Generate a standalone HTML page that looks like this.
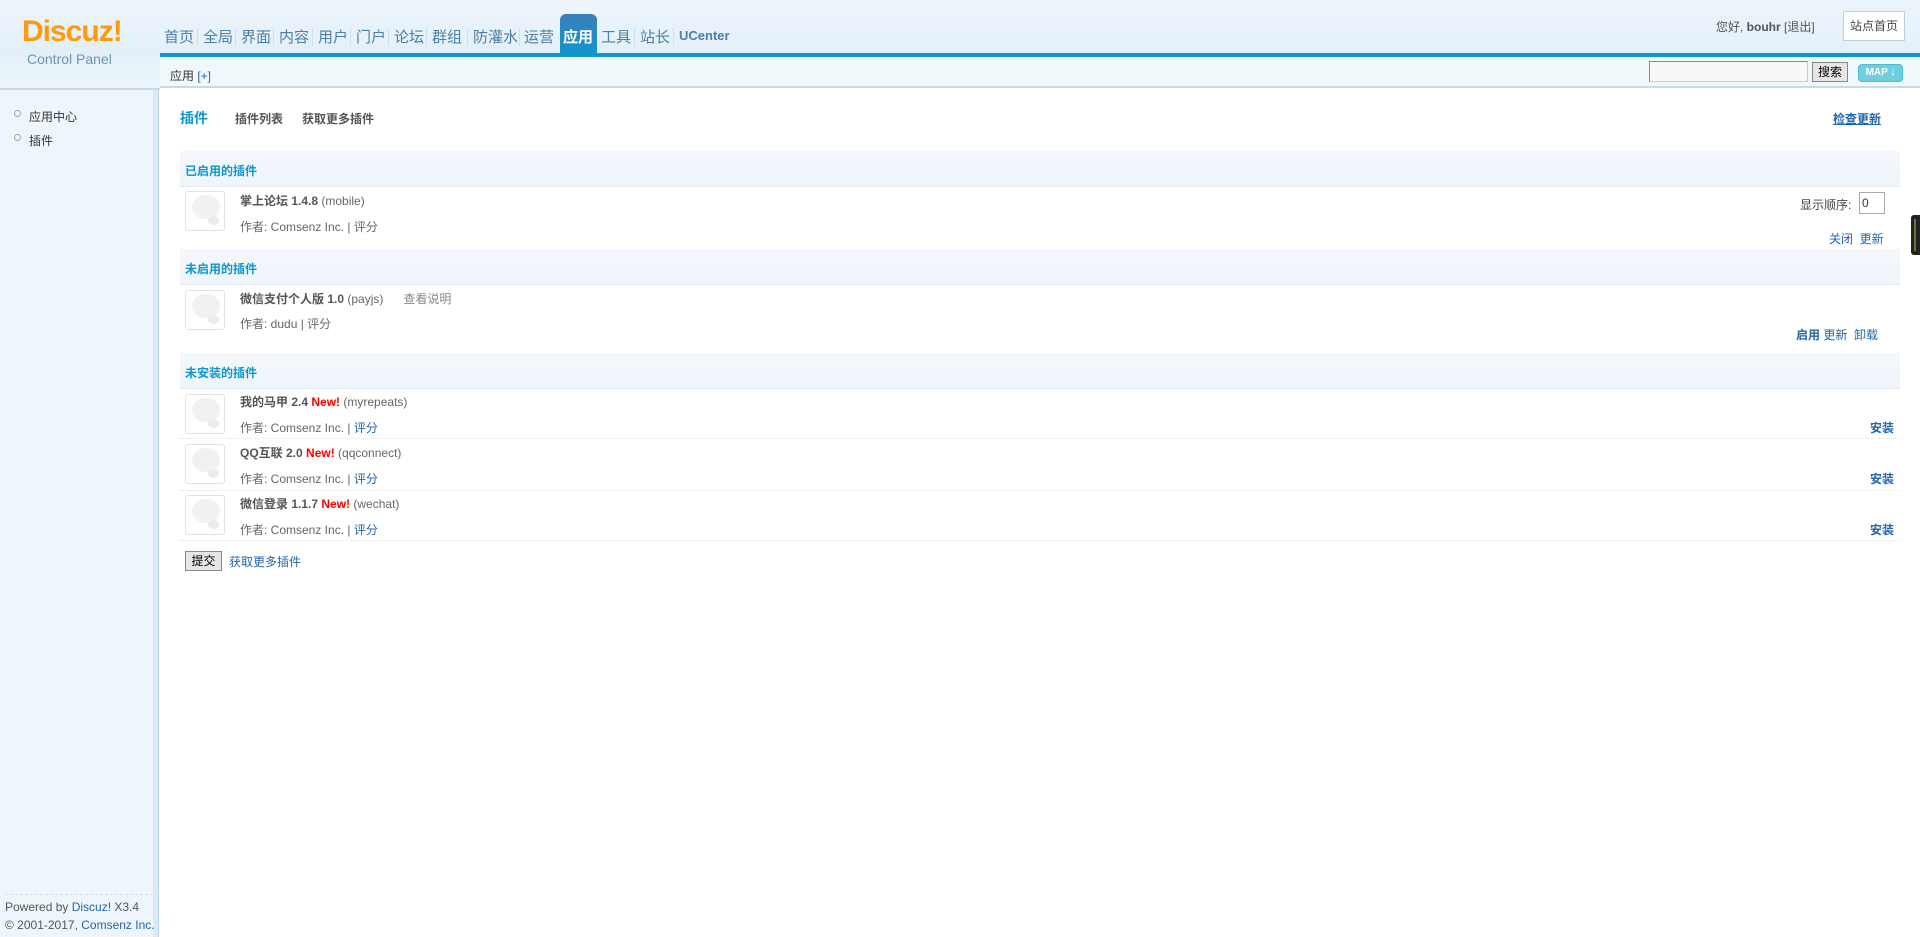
<!DOCTYPE html>
<html><head><meta charset="utf-8"><style>
*{margin:0;padding:0;box-sizing:border-box}
body{width:1920px;height:937px;position:relative;overflow:hidden;background:#fff;font:12px "Liberation Sans","Noto Sans CJK SC",sans-serif;color:#333}
.a{position:absolute;white-space:nowrap}
#hd{left:0;top:0;width:1920px;height:88px;background:linear-gradient(#eef5fc,#e3eff8 53px,#edf5fb 88px)}
#hdl{left:0;top:88px;width:160px;height:2px;background:#c6dbe7}
#bar{left:160px;top:53px;width:1760px;height:4px;background:#0d98cc}
#sub{left:160px;top:57px;width:1760px;height:31px;background:#f1f8fc;border-bottom:2px solid #c6dbe7}
#side{left:0;top:90px;width:153px;height:847px;background:#eef6fb}
#side2{left:153px;top:90px;width:6px;height:847px;background:#ddeaf4;border-right:1px solid #b9d3e4}
#logo{left:22px;top:15px;font:bold 30px "Liberation Sans",sans-serif;color:#ff9a0e;letter-spacing:-1px}
#cp{left:27px;top:51px;font-size:14px;color:#6a97ae}
.nav{top:26px;font-size:15px;color:#4a80a4}
.sep{top:28px;width:1px;height:18px;background:#cfe0ec}
#act{left:560px;top:14px;width:37px;height:43px;background:linear-gradient(#3a7fba,#0d98cc);border-radius:6px 6px 0 0}
.sec{left:180px;width:1720px;height:36px;background:linear-gradient(#f4f8fc,#eef5fb);border-bottom:1px dotted #d3e3ee}
.sec span{position:absolute;left:5px;top:11px;font-weight:bold;color:#0e97cc}
.ic{left:185px;width:40px;height:40px;border:1px solid #e2e2e2;border-radius:3px;background:#fff;overflow:hidden}
.ic i{position:absolute;left:6px;top:3px;width:28px;height:24px;background:#f1f1f1;border-radius:50%}
.ic b{position:absolute;left:22px;top:24px;width:11px;height:9px;background:#ececec;border-radius:50%}
.nm{left:240px;color:#666}
.nm b{color:#555}
.au{left:240px;color:#666}
.bl{color:#2366a8}
.new{color:#f00;font-weight:bold}
.ln{left:180px;width:1720px;border-top:1px dotted #dde6ee}
.act{color:#2366a8;font-weight:bold}
</style></head><body>
<div class="a" id="hd"></div>
<div class="a" id="hdl"></div>
<div class="a" id="side"></div>
<div class="a" id="side2"></div>
<div class="a" id="sub"></div>
<div class="a" id="bar"></div>
<div class="a" id="act"></div>
<div class="a" id="logo">Discuz!</div>
<div class="a" id="cp">Control Panel</div>
<div class="a nav" style="left:164px">首页</div><div class="a sep" style="left:197px"></div>
<div class="a nav" style="left:203px">全局</div><div class="a sep" style="left:235px"></div>
<div class="a nav" style="left:241px">界面</div><div class="a sep" style="left:273px"></div>
<div class="a nav" style="left:279px">内容</div><div class="a sep" style="left:312px"></div>
<div class="a nav" style="left:318px">用户</div><div class="a sep" style="left:350px"></div>
<div class="a nav" style="left:356px">门户</div><div class="a sep" style="left:388px"></div>
<div class="a nav" style="left:394px">论坛</div><div class="a sep" style="left:426px"></div>
<div class="a nav" style="left:432px">群组</div><div class="a sep" style="left:467px"></div>
<div class="a nav" style="left:473px">防灌水</div><div class="a sep" style="left:519px"></div>
<div class="a nav" style="left:524px">运营</div>
<div class="a nav" style="left:563px;color:#fff;font-weight:bold">应用</div>
<div class="a nav" style="left:601px">工具</div><div class="a sep" style="left:634px"></div>
<div class="a nav" style="left:640px">站长</div><div class="a sep" style="left:673px"></div>
<div class="a nav" style="left:679px;font-size:13px;font-weight:bold;top:28px">UCenter</div>
<div class="a" style="left:1716px;top:18px;color:#555">您好, <b>bouhr</b> [<span>退出</span>]</div>
<div class="a" style="left:1843px;top:11px;width:62px;height:30px;border:1px solid #bcd0da;background:#fff;color:#444;text-align:center;line-height:28px">站点首页</div>
<div class="a" style="left:170px;top:67px">应用 <span class="bl">[+]</span></div>
<div class="a" style="left:1649px;top:61px;width:159px;height:21px;border:1px solid #888;border-right-color:#ccc;border-bottom-color:#ccc;background:#f8f8f8"></div>
<div class="a" style="left:1812px;top:62px;width:36px;height:20px;border:1px solid #888;background:#e6e6e6;text-align:center;line-height:18px;color:#000">搜索</div>
<div class="a" style="left:1858px;top:64px;width:45px;height:18px;background:#6ecfe0;border:1px solid #52b9d0;border-radius:4px;color:#fff;font-weight:bold;font-size:10px;text-align:center;line-height:16px">MAP ↓</div>
<div class="a" style="left:14px;top:110px;width:7px;height:7px;border:1px solid #9ab;border-radius:50%"></div>
<div class="a" style="left:29px;top:108px">应用中心</div>
<div class="a" style="left:14px;top:134px;width:7px;height:7px;border:1px solid #9ab;border-radius:50%"></div>
<div class="a" style="left:29px;top:132px">插件</div>
<div class="a" style="left:5px;top:894px;width:148px;border-top:1px dashed #ddd"></div>
<div class="a" style="left:5px;top:900px;color:#555">Powered by <span class="bl">Discuz!</span> X3.4</div>
<div class="a" style="left:5px;top:918px;color:#555">© 2001-2017, <span class="bl">Comsenz Inc.</span></div>
<div class="a" style="left:180px;top:108px;font-size:14px;font-weight:bold;color:#0e97cc">插件</div>
<div class="a" style="left:235px;top:110px;font-weight:bold;color:#555">插件列表</div>
<div class="a" style="left:302px;top:110px;font-weight:bold;color:#555">获取更多插件</div>
<div class="a" style="left:1833px;top:110px;font-weight:bold;color:#2366a8;text-decoration:underline">检查更新</div>
<div class="a sec" style="top:151px"><span>已启用的插件</span></div>
<div class="a ic" style="top:191px"><i></i><b></b></div>
<div class="a nm" style="top:192px"><b>掌上论坛 1.4.8</b> (mobile)</div>
<div class="a au" style="top:218px">作者: Comsenz Inc. | 评分</div>
<div class="a" style="left:1800px;top:196px;color:#444">显示顺序:</div>
<div class="a" style="left:1859px;top:192px;width:26px;height:22px;border:1px solid #aaa;background:#fff;padding-left:2px;line-height:20px">0</div>
<div class="a bl" style="left:1829px;top:230px">关闭 &nbsp;更新</div>
<div class="a sec" style="top:249px"><span>未启用的插件</span></div>
<div class="a ic" style="top:290px"><i></i><b></b></div>
<div class="a nm" style="top:290px"><b>微信支付个人版 1.0</b> (payjs) &nbsp; &nbsp; &nbsp;<span style="color:#888">查看说明</span></div>
<div class="a au" style="top:315px">作者: dudu | 评分</div>
<div class="a" style="left:1796px;top:326px"><span class="act">启用</span> <span class="bl">更新</span> &nbsp;<span class="bl">卸载</span></div>
<div class="a sec" style="top:353px"><span>未安装的插件</span></div>
<div class="a ic" style="top:394px"><i></i><b></b></div>
<div class="a nm" style="top:393px"><b>我的马甲 2.4</b> <span class="new">New!</span> (myrepeats)</div>
<div class="a au" style="top:419px">作者: Comsenz Inc. | <span class="bl">评分</span></div>
<div class="a act" style="left:1870px;top:419px">安装</div>
<div class="a ln" style="top:438px"></div>
<div class="a ic" style="top:444px"><i></i><b></b></div>
<div class="a nm" style="top:444px"><b>QQ互联 2.0</b> <span class="new">New!</span> (qqconnect)</div>
<div class="a au" style="top:470px">作者: Comsenz Inc. | <span class="bl">评分</span></div>
<div class="a act" style="left:1870px;top:470px">安装</div>
<div class="a ln" style="top:490px"></div>
<div class="a ic" style="top:495px"><i></i><b></b></div>
<div class="a nm" style="top:495px"><b>微信登录 1.1.7</b> <span class="new">New!</span> (wechat)</div>
<div class="a au" style="top:521px">作者: Comsenz Inc. | <span class="bl">评分</span></div>
<div class="a act" style="left:1870px;top:521px">安装</div>
<div class="a ln" style="top:540px"></div>
<div class="a" style="left:185px;top:551px;width:37px;height:20px;border:1px solid #888;background:#e6e6e6;text-align:center;line-height:18px;color:#000">提交</div>
<div class="a bl" style="left:229px;top:553px">获取更多插件</div>
<div class="a" style="left:1911px;top:215px;width:9px;height:40px;background:#222;border-radius:3px 0 0 3px"></div>
<div class="a" style="left:1914px;top:219px;width:2px;height:32px;background:#5a7a3a"></div>
</body></html>
